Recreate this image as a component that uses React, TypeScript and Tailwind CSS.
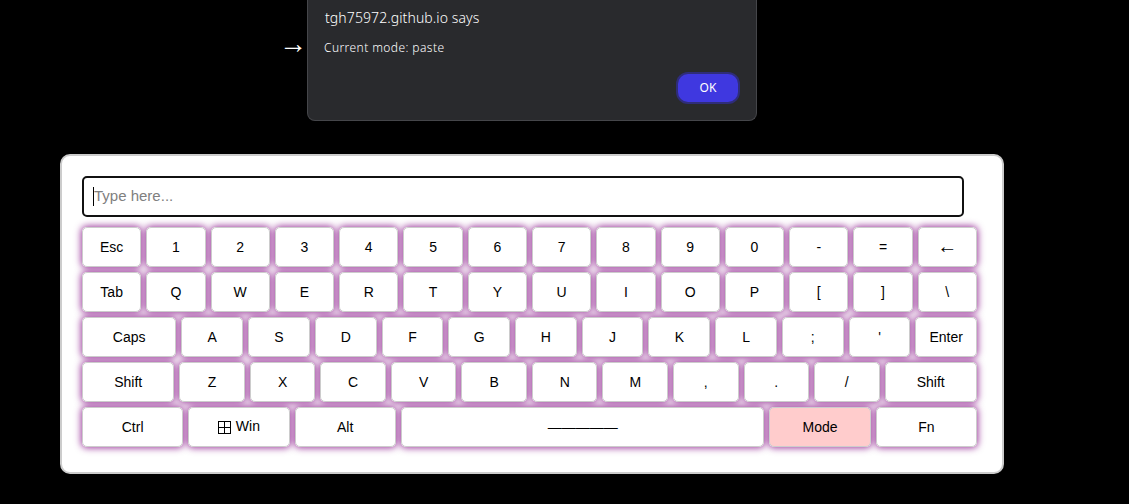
import React from 'react';

const keyFlex: Record<string, string> = {
  Caps: 'flex-[1.53]',
  Shift: 'flex-[1.41]',
  Space: 'flex-[3.59]',
};

const rows: string[][] = [
  ['Esc', '1', '2', '3', '4', '5', '6', '7', '8', '9', '0', '-', '=', '←'],
  ['Tab', 'Q', 'W', 'E', 'R', 'T', 'Y', 'U', 'I', 'O', 'P', '[', ']', '\\'],
  ['Caps', 'A', 'S', 'D', 'F', 'G', 'H', 'J', 'K', 'L', ';', "'", 'Enter'],
  ['Shift', 'Z', 'X', 'C', 'V', 'B', 'N', 'M', ',', '.', '/', 'Shift'],
  ['Ctrl', 'Win', 'Alt', 'Space', 'Mode', 'Fn'],
];

const WinIcon = () => (
  <svg width="13" height="13" viewBox="0 0 13 13" fill="none" stroke="black" strokeWidth="1" shapeRendering="crispEdges">
    <rect x="0.5" y="0.5" width="12" height="12" />
    <line x1="6.5" y1="0" x2="6.5" y2="13" />
    <line x1="0" y1="6.5" x2="13" y2="6.5" />
  </svg>
);

const Key: React.FC<{ label: string }> = ({ label }) => {
  const flex = keyFlex[label] ?? 'flex-1';
  const bg = label === 'Mode' ? 'bg-[#ffcccc]' : 'bg-white';

  let content: React.ReactNode = <span>{label}</span>;
  if (label === 'Win') content = <span className="-mt-[2px]">{label}</span>;
  if (label === 'Space') content = '—————';
  if (label === '←') content = <span className="text-[20px] leading-none -mt-[2px]">←</span>;

  return (
    <div className={`${flex} relative min-w-0 h-10`}>
      {/* glow sits under every key so neighbours don't tint each other */}
      <div className="absolute inset-0 -z-10 rounded-[5px] shadow-[0_0_7px_1px_rgba(128,0,128,0.78)]" />
      <div
        className={`${bg} h-full flex items-center justify-center gap-[5px] rounded-[5px] border border-[#ccc] text-[14px] text-black`}
      >
        {label === 'Win' && <WinIcon />}
        {content}
      </div>
    </div>
  );
};

export default function App() {
  return (
    <div className="w-[1129px] h-[504px] overflow-hidden bg-black font-['Liberation_Sans',Arial,sans-serif]">
      {/* alert row */}
      <div className="flex items-start h-[121px] pl-[279px]">
        <span className="w-7 mt-[30px] text-[28px] leading-7 text-white">→</span>
        <div className="w-[450px] h-[121px] flex flex-col bg-[#292a2d] border border-t-0 border-[#45464a] rounded-b-[8px] pl-4 pr-4 font-['Noto_Sans',sans-serif] text-white">
          <div className="mt-[8px] ml-px text-[14px] leading-5 tracking-[0.1px] font-light">tgh75972.github.io says</div>
          <div className="mt-[10px] text-[12px] leading-5 tracking-[0.42px] font-light">Current mode: paste</div>
          <div className="flex justify-end mt-[16px]">
            <button className="w-[60px] h-[28px] rounded-[10px] bg-[#3f38e0] border-0 ring-2 ring-[#2f2d7a] text-[12px] text-white mr-[2px]">
              OK
            </button>
          </div>
        </div>
      </div>

      {/* keyboard panel */}
      <div className="ml-[60px] mt-[33px] w-[944px] h-[320px] bg-white border-2 border-[#ccc] rounded-[10px] pt-5 pl-5 pr-[25px]">
        <div className="relative w-[882px]">
          <input
            placeholder="Type here..."
            className="w-full h-[41px] px-[10px] pb-[3px] text-[15px] text-black placeholder:text-[#808080] border-2 border-[#111] rounded-[5px] outline-none bg-white"
          />
          <div className="absolute left-[11px] top-[11px] w-px h-[19px] bg-black" />
        </div>
        <div className="isolate mt-[10px] flex flex-col gap-[5px]">
          {rows.map((row, i) => (
            <div key={i} className="flex gap-[5px]">
              {row.map((k, j) => (
                <Key key={j} label={k} />
              ))}
            </div>
          ))}
        </div>
      </div>
    </div>
  );
}
